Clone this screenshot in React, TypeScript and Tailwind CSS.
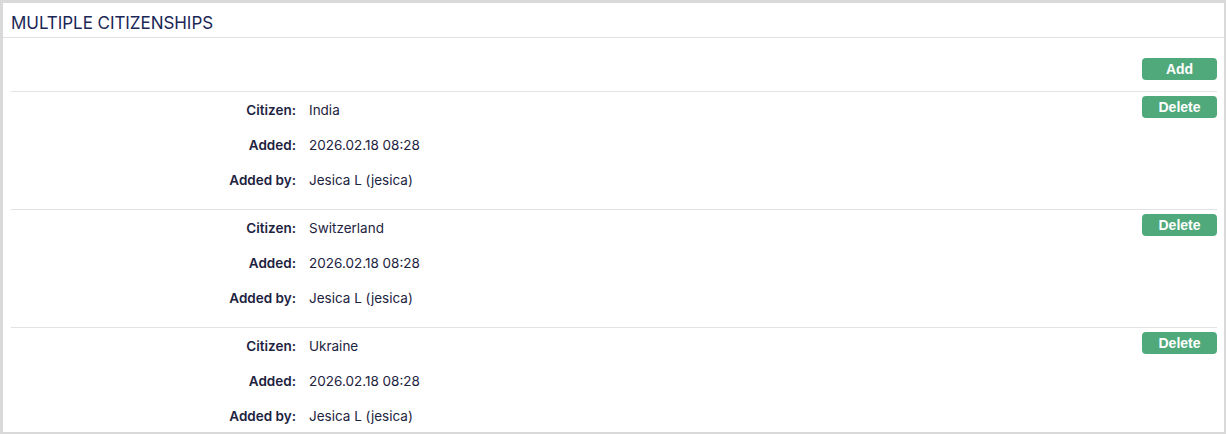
const entries = [
  { citizen: "India", added: "2026.02.18 08:28", by: "Jesica L (jesica)" },
  { citizen: "Switzerland", added: "2026.02.18 08:28", by: "Jesica L (jesica)" },
  { citizen: "Ukraine", added: "2026.02.18 08:28", by: "Jesica L (jesica)" },
];

function GreenButton({ label }: { label: string }) {
  return (
    <button className="block w-[75px] h-[22px] rounded-[4px] bg-[#4fa97b] text-white text-[14px] font-bold font-['Liberation_Sans',Arial,sans-serif] leading-none">
      {label}
    </button>
  );
}

export default function App() {
  return (
    <div className="w-[1226px] h-[434px] bg-[#d9d9d9] pt-[3px] pl-[3px] pr-[2px] pb-[2px] font-['Inter',sans-serif]">
      <div className="bg-white h-full overflow-hidden">
        <div className="h-[35px] border-b border-[#e2e2e2] pl-2 pt-[7px] flex items-center">
          <h2 className="text-[17px] text-[#1b2756] tracking-[-0.05px]">MULTIPLE CITIZENSHIPS</h2>
        </div>
        <div className="pl-2 pr-[7px]">
          <div className="flex justify-end pt-[20px] pb-[11px]">
            <GreenButton label="Add" />
          </div>
          {entries.map((e, i) => (
            <div key={i} className="border-t border-[#e2e2e2] flex justify-between pt-px pb-[11px]">
              <div className="grid grid-cols-[285px_1fr] gap-x-[13px] text-[13.5px] text-[#1d2340]">
                {[
                  ["Citizen:", e.citizen],
                  ["Added:", e.added],
                  ["Added by:", e.by],
                ].map(([l, v]) => (
                  <div key={l} className="contents">
                    <div className="h-[35px] flex items-center justify-end font-semibold">{l}</div>
                    <div className="h-[35px] flex items-center">{v}</div>
                  </div>
                ))}
              </div>
              <div className="pt-[3px]">
                <GreenButton label="Delete" />
              </div>
            </div>
          ))}
        </div>
      </div>
    </div>
  );
}
